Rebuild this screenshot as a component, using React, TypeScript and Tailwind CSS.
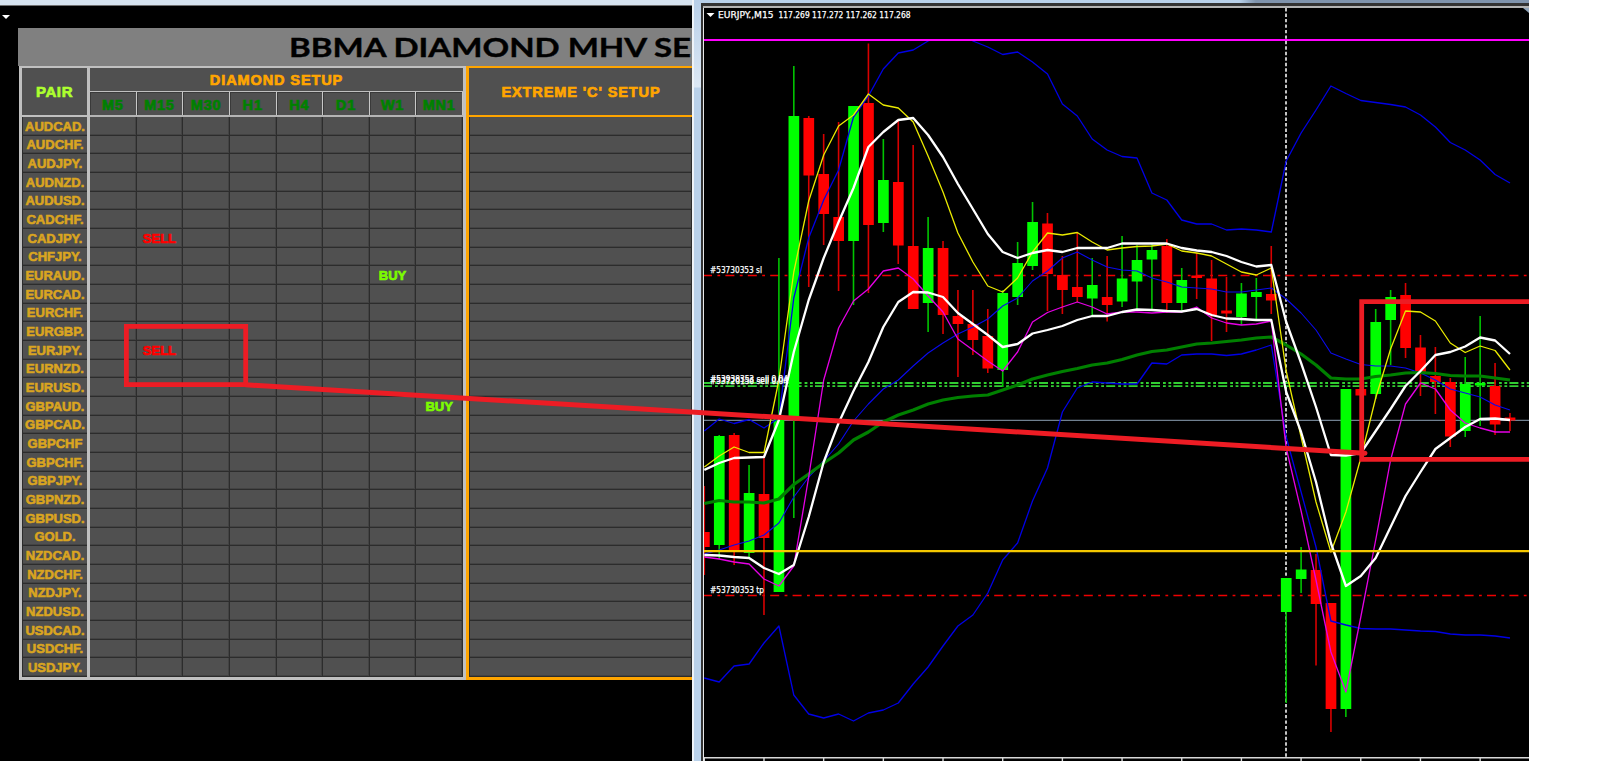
import React from "react";

const PAIRS = [
  "AUDCAD.", "AUDCHF.", "AUDJPY.", "AUDNZD.", "AUDUSD.", "CADCHF.", "CADJPY.", "CHFJPY.", "EURAUD.", "EURCAD.",
  "EURCHF.", "EURGBP.", "EURJPY.", "EURNZD.", "EURUSD.", "GBPAUD.", "GBPCAD.", "GBPCHF", "GBPCHF.", "GBPJPY.",
  "GBPNZD.", "GBPUSD.", "GOLD.", "NZDCAD.", "NZDCHF.", "NZDJPY.", "NZDUSD.", "USDCAD.", "USDCHF.", "USDJPY.",
];
const FRAMES = ["M5", "M15", "M30", "H1", "H4", "D1", "W1", "MN1"];
const SIGNALS: Record<string, "SELL" | "BUY"> = {
  "CADJPY.-M15": "SELL",
  "EURAUD.-W1": "BUY",
  "EURJPY.-M15": "SELL",
  "GBPAUD.-MN1": "BUY",
};

// Bars: [u(p)/d(own), body top, body bottom, wick top, wick bottom]; the first one is cut by the left frame.
type Bar = ["u" | "d", number, number, number, number];
const BARS: Bar[] = [
  ["d", 532, 547, 486, 575], ["u", 436, 545, 435, 559], ["d", 435, 550, 433, 565], ["u", 493, 553, 465, 557],
  ["d", 494, 538, 455, 615], ["u", 419, 592, 258, 592], ["u", 116, 416, 66, 518], ["d", 118, 175.5, 116, 287],
  ["d", 174, 214, 134, 245], ["d", 217, 241, 122, 291], ["u", 106, 241, 106, 305], ["d", 103, 225, 43.5, 293],
  ["u", 180, 223, 139, 232], ["d", 182, 245.5, 121, 264], ["d", 246, 309, 145, 309], ["u", 248, 303, 217, 332],
  ["d", 248, 315, 241, 334], ["d", 316, 324, 290, 377], ["d", 324, 340, 290, 355], ["d", 336, 368.5, 309, 373],
  ["u", 293, 370, 290, 387], ["u", 263, 297, 242, 305], ["u", 222, 266, 202, 270], ["d", 223.5, 274, 213, 311],
  ["d", 275, 290, 256, 314], ["d", 287, 297, 233, 302], ["u", 285, 298.5, 258, 316], ["d", 297, 305, 256, 321.5],
  ["u", 278.5, 301.5, 236, 307], ["u", 260, 281.5, 245, 310], ["u", 250, 259.5, 243, 311], ["d", 246, 303, 239, 313],
  ["u", 280, 303, 268, 311], ["d", 275.5, 278, 253, 299], ["d", 278.5, 315, 260, 341], ["d", 310.5, 313.5, 277, 332],
  ["u", 293.5, 317, 283, 325], ["u", 292, 297, 278, 320], ["d", 294, 300.5, 246, 314], ["u", 578, 612, 578, 703],
  ["u", 569.5, 579, 547, 593], ["d", 570, 604, 554, 665.5], ["d", 603, 709, 603, 732], ["u", 389, 709, 389, 717],
  ["d", 389, 395.5, 387, 397], ["u", 322, 394, 309, 399], ["u", 297, 320, 290, 365], ["d", 295, 348, 283, 358],
  ["d", 347.5, 374, 335, 396], ["d", 376, 382, 347, 414], ["d", 382, 436.5, 378, 447], ["u", 384, 431, 357, 437],
  ["u", 383, 385.5, 316, 426], ["d", 386, 424.5, 363, 435], ["d", 417.5, 420.5, 413, 431],
];
const barX = (i: number) => 704.3 + 14.92 * i;

const BB_UP = [431, 419, 423.5, 419.5, 428, 418, 298, 238, 200, 170, 117, 96, 69, 53, 50, 41, 36, 34, 41, 47, 54.5, 52, 62, 74, 104, 116, 139, 150, 156.5, 158, 193, 200, 220, 224, 224, 230, 229, 230, 232, 161, 133, 110, 86, 93.5, 100.5, 102.5, 104.5, 107, 115, 127, 142.5, 150, 160, 174.5, 183];
const BB_MID = [554, 550, 545, 541, 535, 523, 497, 477, 461, 444, 421, 404, 389, 380, 366, 353, 343, 334, 327, 319, 306, 298, 281, 271, 258, 252, 260, 267, 270, 271, 278, 282, 287, 288, 289, 292, 292, 290, 288, 299, 313, 330, 353, 359, 364.5, 366, 366, 368, 373, 380, 389, 393, 397, 405, 410];
const BB_LOW = [678, 682, 666, 664, 643, 626, 695, 714, 718, 714, 721, 713, 710, 703, 684, 667, 646, 626, 615, 593, 560, 543, 501, 468, 412, 388, 382, 383, 384, 384, 363, 364, 355, 354, 354, 355.5, 354, 350, 345, 437, 492, 547, 621, 625, 628.5, 629, 629, 630, 631, 631.5, 634, 635, 635, 636, 638];
const YELLOW = [467, 456, 447, 452.5, 452.5, 380, 272, 201, 155, 126, 115, 94, 105, 108, 122, 156, 192, 233, 262, 286, 292, 278, 252, 233, 235, 232.5, 242, 250, 248, 246.5, 246, 244, 251, 253, 256, 264, 272, 275, 268, 371, 437, 502, 552, 512, 458, 398, 349, 311, 312, 321, 343, 352.5, 346, 350.5, 370];
const WHITE_UP = [470, 463, 458, 457.5, 457, 420, 352, 300, 258, 222, 188, 147, 132, 120, 118, 135, 157, 184, 209, 234, 252, 258, 253, 250, 252, 248, 248, 248, 243.5, 243.5, 243.5, 243.5, 248, 250.5, 252, 256, 262, 266.5, 265, 322, 363, 407, 455, 455.5, 453, 431, 409, 386, 371, 355, 352, 346.5, 337.5, 340.5, 354];
const WHITE_LOW = [555, 555.5, 557, 558, 568, 574, 565, 517, 462, 423, 391, 362, 327, 302, 292, 292.5, 297, 313, 324, 335, 347, 344, 333.5, 330, 326, 320, 316, 316, 312, 309.5, 310, 311, 311.5, 309, 315, 318.5, 319, 320, 320, 392, 432, 482, 543, 586, 576, 558, 527, 496, 472, 449, 438, 427, 419, 418.5, 420];
const MAGENTA = [557, 559, 562, 564, 579, 586, 566, 477, 380, 328, 301, 289, 271, 268, 279, 296, 312, 339, 350, 361, 371, 352, 322, 312.5, 307, 302, 307, 314, 312, 312, 313, 312, 312, 307, 318, 323, 325, 324, 321, 448, 511, 580, 652, 692, 617, 540, 460, 404, 383, 389, 410, 423, 428, 432, 432];
const GREEN = [503.5, 500.5, 502, 502, 503, 499, 484.5, 474, 463, 453, 440, 432, 422, 415, 410, 404, 400, 397.5, 396, 395, 390, 385, 379, 375, 371.5, 368.5, 365, 363, 359.5, 355, 351.5, 350, 347, 344, 343, 341.5, 340, 338, 337, 345, 354, 365, 378, 379, 379, 376.5, 375, 373, 372.5, 373.5, 375.5, 376, 376, 378, 380];

function Line({ ys, color, width }: { ys: number[]; color: string; width: number }) {
  return (
    <polyline
      fill="none"
      stroke={color}
      strokeWidth={width}
      strokeLinejoin="round"
      points={ys.map((y, i) => `${barX(i).toFixed(1)},${y}`).join(" ")}
    />
  );
}

function Level({ y, color, width, dash, offset }: { y: number; color: string; width: number; dash?: string; offset?: number }) {
  return <line x1={704} x2={1529} y1={y} y2={y} stroke={color} strokeWidth={width} strokeDasharray={dash} strokeDashoffset={offset} />;
}

function Label({ x, y, w, children }: { x: number; y: number; w: number; children: string }) {
  return (
    <text x={x} y={y} textLength={w} lengthAdjust="spacingAndGlyphs" fill="#fff" stroke="#fff" strokeWidth={0.25} className="text-[9.5px] font-['DejaVu_Sans_Condensed','DejaVu_Sans',sans-serif]">
      {children}
    </text>
  );
}

function Chart() {
  return (
    <svg className="block h-[753px] w-[825px]" viewBox="704 8 825 753">
      <rect x={704} y={8} width={825} height={753} fill="#000" />
      <line x1={1286} x2={1286} y1={8} y2={757} stroke="#d8d8d8" strokeWidth={1.8} strokeDasharray="3.4 2.08" />
      <Level y={275.5} color="#ee0000" width={1.3} dash="9 5.4 2.8 5.2" offset={1} />
      <Level y={595.5} color="#ee0000" width={1.3} dash="9 5.4 2.8 5.2" offset={1} />
      <Level y={420.3} color="#708090" width={1.3} />
      <Level y={383} color="#32cd32" width={1.9} dash="9 3 2.8 2.6 2.8 2.2" offset={1} />
      <Level y={386.2} color="#32cd32" width={1.7} dash="9 3 2.8 2.6 2.8 2.2" offset={1} />
      {BARS.map(([dir, top, bottom, hi, lo], i) => {
        const color = dir === "u" ? "#00ff00" : "#ff0000";
        const x = barX(i);
        return (
          <g key={i}>
            <line x1={x} x2={x} y1={hi} y2={lo} stroke={dir === "u" ? "#00c400" : "#d80000"} strokeWidth={1.6} />
            <rect x={x - 5.3} y={top} width={10.7} height={bottom - top} fill={color} />
          </g>
        );
      })}
      <Line ys={BB_MID} color="#0a0aee" width={1.1} />
      <Line ys={BB_UP} color="#0000e6" width={1.3} />
      <Line ys={BB_LOW} color="#0000e6" width={1.3} />
      <Line ys={GREEN} color="#008000" width={3.2} />
      <Line ys={MAGENTA} color="#e600e6" width={1.3} />
      <Line ys={YELLOW} color="#eaea00" width={1.3} />
      <Line ys={WHITE_UP} color="#ffffff" width={2.3} />
      <Line ys={WHITE_LOW} color="#ffffff" width={2.3} />
      <rect x={704} y={8} width={825} height={31} fill="#000" />
      <line x1={1286} x2={1286} y1={8} y2={39} stroke="#d8d8d8" strokeWidth={1.8} strokeDasharray="3.4 2.08" />
      <Level y={40} color="#ff00ff" width={2} />
      <Level y={551.2} color="#f5c800" width={2.2} />
      <path d="M706.5 13h8l-4 4z" fill="#fff" />
      <path d="M1523 8h6v5z" fill="#8fa3b8" />
      <Label x={718} y={18} w={55.5}>EURJPY.,M15</Label>
      <Label x={778.5} y={18} w={132}>117.269 117.272 117.262 117.268</Label>
      <Label x={710} y={273} w={52}>#53730353 sl</Label>
      <Label x={710} y={381.5} w={78}>#53938353 sell 0.04</Label>
      <Label x={710} y={384} w={78}>#53720156 sell 0.04</Label>
      <Label x={710} y={593} w={54}>#53730353 tp</Label>
      <line x1={704} x2={1529} y1={757.7} y2={757.7} stroke="#d8d8d8" strokeWidth={1.5} />
      {Array.from({ length: 14 }, (_, k) => (
        <line key={k} x1={barX(k * 4)} x2={barX(k * 4)} y1={758} y2={761} stroke="#d8d8d8" strokeWidth={1.4} />
      ))}
    </svg>
  );
}

const HEAVY = "font-['Liberation_Sans',Arial,sans-serif] font-bold leading-none";

function Scanner() {
  return (
    <div className="flex h-[652px] w-[674px] flex-col">
      <div className="flex h-[38px] shrink-0 items-center bg-[#808080] pl-[270.5px]">
        <h1 className="w-0 origin-left scale-x-[1.2] whitespace-nowrap font-['Lato',sans-serif] text-[27.5px] font-bold leading-none text-black [-webkit-text-stroke:0.4px_#000]">
          BBMA DIAMOND MHV SE
        </h1>
      </div>
      <div className="flex flex-1 pl-px">
        <div className="flex w-[447px] shrink-0 border-x-[3px] border-b-[3px] border-t-2 border-[#c0c0c0]">
          <div className="flex w-[68px] shrink-0 flex-col border-r-[3px] border-[#c0c0c0]">
            <div className={`${HEAVY} flex h-[49px] shrink-0 items-center justify-center border-b-2 border-[#c0c0c0] bg-[#505050] text-[15px] tracking-[0.6px] text-[#adff2f] [-webkit-text-stroke:0.7px_#adff2f]`}>
              PAIR
            </div>
            <div className="grid flex-1 grid-rows-[repeat(30,minmax(0,1fr))]">
              {PAIRS.map((pair) => (
                <div key={pair} className={`${HEAVY} flex items-center justify-center border-b border-l border-[#2c2c2c] bg-[#505050] pt-px text-[13px] text-[#daa520] shadow-[inset_0_-1px_#434343] [-webkit-text-stroke:0.6px_#daa520]`}>
                  {pair}
                </div>
              ))}
            </div>
          </div>
          <div className="flex flex-1 flex-col">
            <div className={`${HEAVY} flex h-[24px] shrink-0 items-center justify-center border-b border-[#c0c0c0] bg-[#505050] pt-[2px] text-[14.5px] tracking-[0.9px] text-[#ffa500] [-webkit-text-stroke:0.7px_#ffa500]`}>
              DIAMOND SETUP
            </div>
            <div className="grid h-[25px] shrink-0 grid-cols-8 border-b-2 border-[#b4b4b4]">
              {FRAMES.map((frame) => (
                <div key={frame} className={`${HEAVY} flex items-center justify-center border-r border-[#c8c8c8] bg-[#505050] pt-[3px] text-[14.5px] tracking-[0.8px] text-[#008000] shadow-[inset_1px_1px_#3a3a3a] [-webkit-text-stroke:0.7px_#008000]`}>
                  {frame}
                </div>
              ))}
            </div>
            <div className="grid flex-1 grid-cols-8 grid-rows-[repeat(30,minmax(0,1fr))]">
              {PAIRS.flatMap((pair) =>
                FRAMES.map((frame) => {
                  const signal = SIGNALS[`${pair}-${frame}`];
                  return (
                    <div key={pair + frame} className="flex items-center justify-center border-b border-r border-[#2c2c2c] bg-[#505050] pt-px shadow-[inset_-1px_-1px_#434343]">
                      {signal && (
                        <span className={`${HEAVY} text-[13px] ${signal === "SELL" ? "text-[#ff0000] [-webkit-text-stroke:0.7px_#ff0000]" : "text-[#7cfc00] [-webkit-text-stroke:0.7px_#7cfc00]"}`}>
                          {signal}
                        </span>
                      )}
                    </div>
                  );
                })
              )}
            </div>
          </div>
        </div>
        <div className="flex flex-1 flex-col border-b-[3px] border-l-[3px] border-t-2 border-[#ffa500]">
          <div className={`${HEAVY} flex h-[49px] shrink-0 items-center justify-center border-b-2 border-[#ffa500] bg-[#505050] pl-px pt-px text-[14.5px] tracking-[0.9px] text-[#ffa500] [-webkit-text-stroke:0.7px_#ffa500]`}>
            EXTREME 'C' SETUP
          </div>
          <div className="grid flex-1 grid-rows-[repeat(30,minmax(0,1fr))]">
            {PAIRS.map((pair) => (
              <div key={pair} className="border-x border-b border-[#2c2c2c] bg-[#505050] shadow-[inset_0_-1px_#434343]" />
            ))}
          </div>
        </div>
      </div>
    </div>
  );
}

function Annotations() {
  return (
    <svg className="pointer-events-none absolute left-0 top-0 h-[761px] w-[1529px]" viewBox="0 0 1529 761" fill="none" stroke="#ed1c24" strokeWidth={4.8}>
      <rect x={126.4} y={326.4} width={119.3} height={58.2} />
      <path d="M246 384.8L1365 453.2" strokeWidth={5} strokeLinecap="round" />
      <path d="M1535 301.6H1361.7V459.3H1535" />
    </svg>
  );
}

export default function App() {
  return (
    <div className="relative flex h-[761px] w-[1600px] overflow-hidden bg-white">
      <section className="flex w-[692px] shrink-0 flex-col bg-black">
        <div className="h-[6px] shrink-0 border-b border-[#707070] bg-[#d6e3f0]" />
        <div className="flex h-[22px] shrink-0 items-start pl-[2px] pt-[9px]">
          <svg className="h-[4px] w-[8px]" viewBox="0 0 8 4"><path d="M0 0h8L4 4z" fill="#fff" /></svg>
        </div>
        <div className="pl-[18px]"><Scanner /></div>
      </section>
      <div className="flex w-[9px] shrink-0 border-l-2 border-[#eef3f8] bg-gradient-to-b from-[#b8cfe8] via-[#dce8f5] via-[87px] to-[#b9d1ea] to-[88px]" />
      <section className="flex w-[828px] shrink-0 flex-col">
        <div className="h-[3px] shrink-0 bg-gradient-to-r from-[#b9d1ea] from-65% to-[#8094ad] to-67%" />
        <div className="flex flex-1 flex-col border-l-2 border-t-[3px] border-[#333] bg-black">
          <div className="h-[2px] shrink-0 bg-[#b4b4b4]" />
          <div className="flex flex-1 border-l border-[#e8e8e8]"><Chart /></div>
        </div>
      </section>
      <Annotations />
    </div>
  );
}
